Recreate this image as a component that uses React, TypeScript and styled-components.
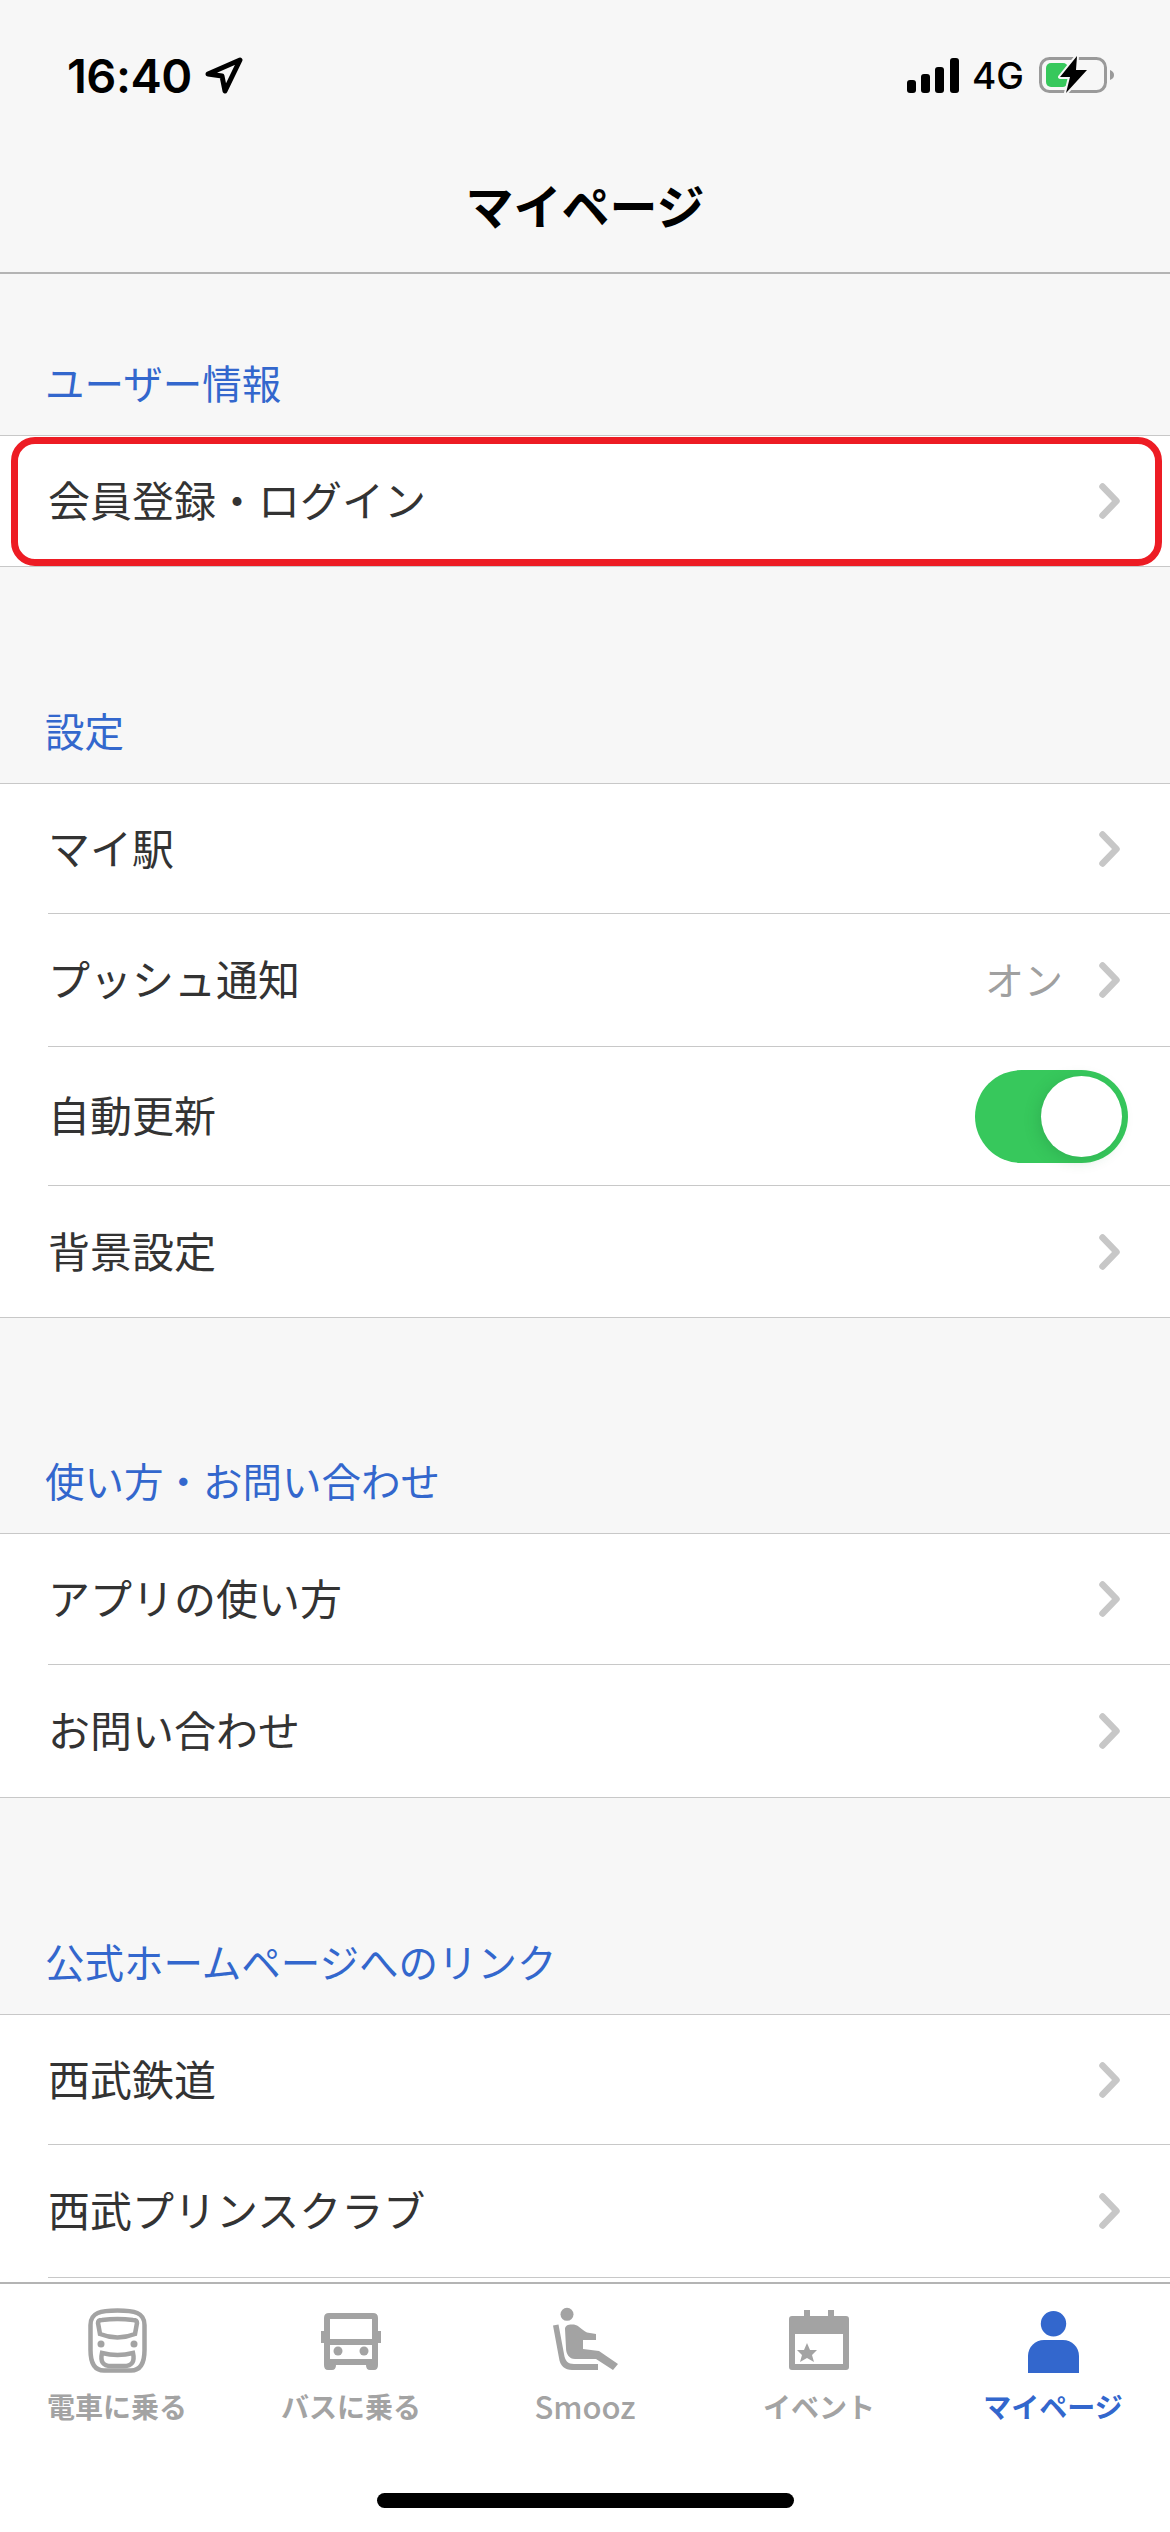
import React from "react";
import styled, { createGlobalStyle } from "styled-components";

const GlobalStyle = createGlobalStyle`
  html, body {
    margin: 0;
    padding: 0;
    background: #f7f7f7;
  }
  * {
    box-sizing: border-box;
  }
`;

const Screen = styled.div`
  display: flex;
  flex-direction: column;
  width: 1170px;
  height: 2532px;
  overflow: hidden;
  background: #f7f7f7;
  font-family: "Noto Sans CJK JP", "Noto Sans", sans-serif;
`;

const Header = styled.header`
  flex: none;
  height: 274px;
  background: #f7f7f7;
  border-bottom: 2px solid #b4b4b4;
`;

const StatusBar = styled.div`
  display: flex;
  justify-content: space-between;
  align-items: center;
  height: 74px;
  margin-top: 38px;
  padding: 0 55px 0 67px;
`;

const StatusGroup = styled.div`
  display: flex;
  align-items: center;
`;

const Clock = styled.span`
  font-family: Inter, "Liberation Sans", sans-serif;
  font-size: 47px;
  font-weight: 600;
  letter-spacing: -0.5px;
  color: #000;
`;

const Network = styled.span`
  margin: 0 15px 0 13px;
  font-family: Inter, "Liberation Sans", sans-serif;
  font-size: 37px;
  font-weight: 500;
  color: #000;
`;

const Title = styled.h1`
  margin: 57px 0 0;
  text-align: center;
  font-size: 48px;
  line-height: 70px;
  font-weight: 700;
  color: #000;
`;

const Content = styled.main`
  flex: 1;
  min-height: 0;
  overflow: hidden;
`;

const SectionLabel = styled.div<{ $height: number }>`
  display: flex;
  align-items: flex-end;
  height: ${(p) => p.$height}px;
  padding: 0 45px 24px;
  font-size: 39.5px;
  line-height: 58px;
  color: #3367cd;
`;

const RowList = styled.div`
  position: relative;
  background: #fff;
  border-top: 1px solid #c8c8c8;
  border-bottom: 1px solid #c8c8c8;
`;

const Row = styled.div<{ $height?: number }>`
  display: flex;
  align-items: center;
  height: ${(p) => p.$height ?? 131}px;
  margin-left: 48px;
  padding-right: 50px;
  border-bottom: 1px solid #c8c8c8;
  &:last-of-type {
    border-bottom: none;
  }
`;

const RowLabel = styled.span`
  flex: 1;
  padding-bottom: 5px;
  font-size: 42px;
  color: #333;
`;

const RowValue = styled.span`
  margin-right: 36px;
  padding-bottom: 5px;
  font-size: 39px;
  color: #a0a0a0;
`;

const Highlight = styled.span`
  position: absolute;
  left: 11px;
  right: 8px;
  top: 1px;
  bottom: 0;
  border: 7px solid #ed1c24;
  border-radius: 24px;
  pointer-events: none;
`;

const Toggle = styled.div`
  position: relative;
  width: 153px;
  height: 93px;
  margin-right: -8px;
  border-radius: 47px;
  background: #37c85c;
`;

const ToggleKnob = styled.div`
  position: absolute;
  top: 6px;
  right: 6px;
  width: 81px;
  height: 81px;
  border-radius: 50%;
  background: #fff;
  box-shadow: -3px 3px 14px rgba(30, 120, 60, 0.25);
`;

const TabBar = styled.nav`
  flex: none;
  display: flex;
  flex-direction: column;
  height: 250px;
  background: #fff;
  border-top: 2px solid #b4b4b4;
`;

const Tabs = styled.div`
  display: grid;
  grid-template-columns: repeat(5, 1fr);
  height: 209px;
`;

const Tab = styled.div<{ $active?: boolean }>`
  display: flex;
  flex-direction: column;
  align-items: center;
  color: ${(p) => (p.$active ? "#3367cd" : "#a3a3a3")};
`;

const TabIcon = styled.div`
  display: flex;
  align-items: flex-end;
  justify-content: center;
  height: 89px;
`;

const TabLabel = styled.span<{ $active?: boolean; $latin?: boolean }>`
  margin-top: 12px;
  font-size: ${(p) => (p.$latin ? "31px" : "28px")};
  line-height: 42px;
  font-weight: ${(p) => (p.$active ? 700 : p.$latin ? 500 : 600)};
`;

const HomeIndicator = styled.div`
  width: 417px;
  height: 15px;
  margin: 0 auto;
  border-radius: 8px;
  background: #000;
`;

const Chevron = () => (
  <svg width="21" height="36" viewBox="0 0 21 36" fill="none">
    <path d="M3.5 3.5 L17.5 18 L3.5 32.5" stroke="#c7c7c7" strokeWidth="6.5" strokeLinecap="round" strokeLinejoin="round" />
  </svg>
);

const LocationArrow = () => (
  <svg width="38" height="37" viewBox="0 0 38 37" fill="none" style={{ marginLeft: 13 }}>
    <path d="M3 17 L35 3 L20 34 L17 19 Z" stroke="#000" strokeWidth="5" strokeLinejoin="round" />
  </svg>
);

const Signal = () => (
  <svg width="52" height="35" viewBox="0 0 52 35" fill="#000">
    <rect x="0" y="22" width="9" height="13" rx="3" />
    <rect x="14" y="16" width="9" height="19" rx="3" />
    <rect x="28" y="9" width="9" height="26" rx="3" />
    <rect x="43" y="0" width="9" height="35" rx="3" />
  </svg>
);

const Battery = () => (
  <svg width="76" height="40" viewBox="0 0 76 40" fill="none">
    <rect x="1.5" y="3.5" width="65" height="33" rx="9" stroke="#9a9a9a" strokeWidth="3" />
    <path d="M71 15 C74 16 75 18 75 20 C75 22 74 24 71 25 Z" fill="#9a9a9a" />
    <rect x="7" y="8" width="22" height="24" rx="5" fill="#37c85c" />
    <path
      d="M38 1 L21 22 L31 22 L27 38 L48 15 L37 15 Z"
      fill="#000"
      stroke="#f7f7f7"
      strokeWidth="4"
      strokeLinejoin="round"
      paintOrder="stroke"
    />
  </svg>
);

const TrainIcon = () => (
  <svg width="59" height="65" viewBox="0 0 59 65" fill="none" stroke="currentColor" strokeWidth="4.5">
    <path d="M29.5 2.5 C13 2.5 2.5 4.5 2.5 17 L2.5 42 C2.5 55 7 62.5 16 62.5 L43 62.5 C52 62.5 56.5 55 56.5 42 L56.5 17 C56.5 4.5 46 2.5 29.5 2.5 Z" />
    <path d="M10 15 Q10 12 14 12 Q29.5 10 45 12 Q49 12 49 15 L47 26 Q29.5 33 12 26 Z" />
    <path d="M14 45 Q29.5 49 45 45 Q48 58 36 58 L23 58 Q11 58 14 45 Z" />
    <circle cx="13" cy="36" r="3.5" fill="currentColor" stroke="none" />
    <circle cx="46" cy="36" r="3.5" fill="currentColor" stroke="none" />
  </svg>
);

const BusIcon = () => (
  <svg width="60" height="60" viewBox="0 0 60 60" fill="currentColor">
    <path
      fillRule="evenodd"
      d="M3 5 Q3 0 8 0 L52 0 Q57 0 57 5 L57 18 L60 18 L60 30 L57 30 L57 52 Q57 57 53 57 L49 57 Q45 57 45 52 L15 52 Q15 57 11 57 L7 57 Q3 57 3 52 L3 30 L0 30 L0 18 L3 18 Z M9 6 L9 26 L51 26 L51 6 Z M9 32 L9 46 L51 46 L51 32 Z"
    />
    <circle cx="17" cy="38" r="4.5" />
    <circle cx="43" cy="38" r="4.5" />
  </svg>
);

const SeatIcon = () => (
  <svg width="67" height="66" viewBox="11 11 67 66" fill="currentColor">
    <circle cx="26" cy="18.3" r="6.5" />
    <path d="M24 33 C24 29 28 28 33 28.5 C37 29 41 34 46 36.5 L55 38 L55 44 L42 44 L42 53 L58 55 L77 68 L72 74 L55 63 L34 63 C28 63 25 58 25 52 Z" />
    <path d="M12 29.5 L17.5 28.5 L23 58 C24 65 27 68 33 68 L57 68 L57 74 L31 74 C24 74 19 70 18 62 Z" />
  </svg>
);

const CalendarIcon = () => (
  <svg width="60" height="63" viewBox="0 0 60 63" fill="currentColor">
    <path
      fillRule="evenodd"
      d="M15 0 L21 0 L21 6 L39 6 L39 0 L45 0 L45 6 L57 6 Q60 6 60 9 L60 57 Q60 60 57 60 L3 60 Q0 60 0 57 L0 9 Q0 6 3 6 L15 6 Z M6 24 L6 54 L54 54 L54 24 Z"
    />
    <path d="M18 33 L21 40 L28 40 L23 45 L25 52 L18 48 L11 52 L13 45 L8 40 L15 40 Z" />
  </svg>
);

const PersonIcon = () => (
  <svg width="51" height="62" viewBox="0 0 51 62" fill="currentColor">
    <circle cx="25.5" cy="12.7" r="12.7" />
    <path d="M0 62 L0 45 C0 36 7 29 16 29 L35 29 C44 29 51 36 51 45 L51 62 Z" />
  </svg>
);

const sections = [
  {
    title: "設定",
    labelHeight: 216,
    rows: [
      { label: "マイ駅", height: 130 },
      { label: "プッシュ通知", value: "オン", height: 133 },
      { label: "自動更新", toggle: true, height: 139 },
      { label: "背景設定" },
    ],
  },
  {
    title: "使い方・お問い合わせ",
    labelHeight: 215,
    rows: [{ label: "アプリの使い方" }, { label: "お問い合わせ", height: 132 }],
  },
  {
    title: "公式ホームページへのリンク",
    labelHeight: 216,
    rows: [{ label: "西武鉄道", height: 130 }, { label: "西武プリンスクラブ", height: 133 }, { label: "" }],
  },
];

const tabs = [
  { label: "電車に乗る", icon: <TrainIcon /> },
  { label: "バスに乗る", icon: <BusIcon /> },
  { label: "Smooz", icon: <SeatIcon />, latin: true },
  { label: "イベント", icon: <CalendarIcon /> },
  { label: "マイページ", icon: <PersonIcon />, active: true },
];

export default function App() {
  return (
    <Screen>
      <GlobalStyle />
      <Header>
        <StatusBar>
          <StatusGroup>
            <Clock>16:40</Clock>
            <LocationArrow />
          </StatusGroup>
          <StatusGroup>
            <Signal />
            <Network>4G</Network>
            <Battery />
          </StatusGroup>
        </StatusBar>
        <Title>マイページ</Title>
      </Header>
      <Content>
        <SectionLabel $height={161}>ユーザー情報</SectionLabel>
        <RowList>
          <Row $height={130}>
            <RowLabel>会員登録・ログイン</RowLabel>
            <Chevron />
          </Row>
          <Highlight />
        </RowList>
        {sections.map((section) => (
          <React.Fragment key={section.title}>
            <SectionLabel $height={section.labelHeight}>{section.title}</SectionLabel>
            <RowList>
              {section.rows.map((row: any, index) => (
                <Row key={index} $height={row.height}>
                  <RowLabel>{row.label}</RowLabel>
                  {row.value && <RowValue>{row.value}</RowValue>}
                  {row.toggle ? (
                    <Toggle>
                      <ToggleKnob />
                    </Toggle>
                  ) : (
                    row.label && <Chevron />
                  )}
                </Row>
              ))}
            </RowList>
          </React.Fragment>
        ))}
      </Content>
      <TabBar>
        <Tabs>
          {tabs.map((tab) => (
            <Tab key={tab.label} $active={tab.active}>
              <TabIcon>{tab.icon}</TabIcon>
              <TabLabel $active={tab.active} $latin={tab.latin}>
                {tab.label}
              </TabLabel>
            </Tab>
          ))}
        </Tabs>
        <HomeIndicator />
      </TabBar>
    </Screen>
  );
}
